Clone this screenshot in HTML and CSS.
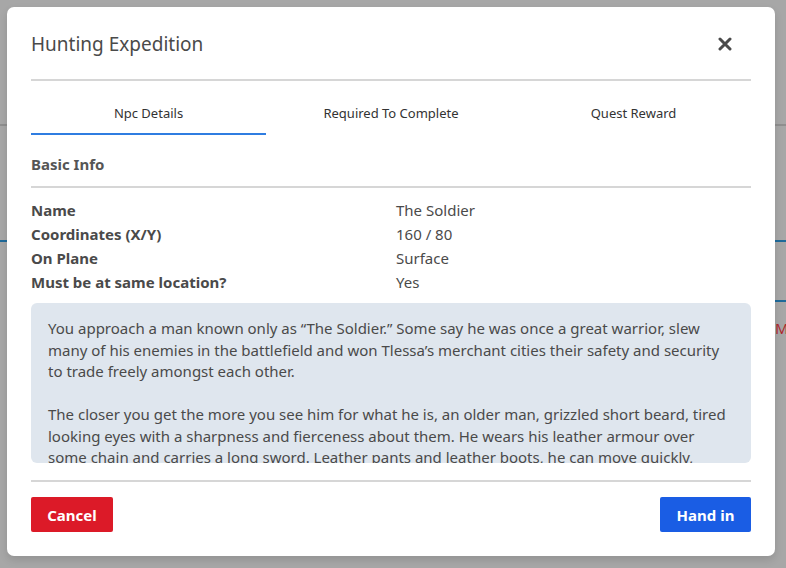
FILE: index.html
```html
<!DOCTYPE html>
<html>
<head>
<meta charset="utf-8">
<link rel="stylesheet" href="styles.css">
</head>
<body>
<div class="backdrop">
  <div class="bg-line bg-line-gray"></div>
  <div class="bg-line bg-line-blue"></div>
  <div class="bg-line bg-line-blue2"></div>
  <div class="bg-red">Mo</div>
</div>
<div class="overlay">
  <div class="modal">
    <div class="modal-header">
      <h2 class="modal-title">Hunting Expedition</h2>
      <button class="close-btn" aria-label="Close">
        <svg width="14" height="14" viewBox="0 0 14 14"><path d="M2 2 L12 12 M12 2 L2 12" stroke="#4a4a4a" stroke-width="3" stroke-linecap="round"/></svg>
      </button>
    </div>
    <div class="tabs">
      <div class="tab active">Npc Details</div>
      <div class="tab">Required To Complete</div>
      <div class="tab">Quest Reward</div>
    </div>
    <div class="section-title">Basic Info</div>
    <div class="info-grid">
      <div class="label">Name</div><div class="value">The Soldier</div>
      <div class="label">Coordinates (X/Y)</div><div class="value">160 / 80</div>
      <div class="label">On Plane</div><div class="value">Surface</div>
      <div class="label">Must be at same location?</div><div class="value">Yes</div>
    </div>
    <div class="description">
      <p>You approach a man known only as “The Soldier.” Some say he was once a great warrior, slew many of his enemies in the battlefield and won Tlessa’s merchant cities their safety and security to trade freely amongst each other.</p>
      <p>The closer you get the more you see him for what he is, an older man, grizzled short beard, tired looking eyes with a sharpness and fierceness about them. He wears his leather armour over some chain and carries a long sword. Leather pants and leather boots, he can move quickly, <span class="nw">and strike</span> with precision when he needs to.</p>
    </div>
    <div class="modal-footer">
      <button class="btn btn-cancel">Cancel</button>
      <button class="btn btn-primary">Hand in</button>
    </div>
  </div>
</div>
</body>
</html>
```
FILE: styles.css
```css
* { box-sizing: border-box; }
html, body {
  margin: 0;
  padding: 0;
  width: 786px;
  height: 568px;
  overflow: hidden;
  background: #a7a7a7;
  font-family: "Noto Sans", "Lato", sans-serif;
  color: #4a4a4a;
}
.backdrop {
  position: absolute;
  inset: 0;
}
.bg-line {
  position: absolute;
  left: 0;
  right: 0;
  height: 2px;
}
.bg-line-gray { top: 124px; background: #8f8f8f; }
.bg-line-blue { top: 240px; background: #1f6a9a; }
.bg-line-blue2 { top: 300px; left: 700px; background: #1f6a9a; }
.bg-red {
  position: absolute;
  left: 775px;
  top: 318px;
  width: 11px;
  overflow: hidden;
  white-space: nowrap;
  font-size: 15px;
  line-height: 20px;
  color: #b0262c;
}
.overlay {
  position: absolute;
  inset: 0;
}
.modal {
  position: absolute;
  left: 7px;
  top: 7px;
  width: 768px;
  height: 549px;
  background: #fff;
  border-radius: 7px;
  box-shadow: 0 4px 8px rgba(0,0,0,0.12);
  padding: 0 24px 24px;
  display: flex;
  flex-direction: column;
}
.modal-header {
  display: flex;
  align-items: center;
  justify-content: space-between;
  padding: 25px 0 23px;
  border-bottom: 2px solid #d6d6d6;
}
.modal-title {
  margin: 0;
  font-size: 19px;
  line-height: 24px;
  font-weight: 400;
  color: #4a4a4a;
}
.close-btn {
  border: 0;
  background: none;
  padding: 0;
  margin-right: 19px;
  width: 14px;
  height: 14px;
  display: flex;
}
.tabs {
  display: grid;
  grid-template-columns: 235px 250px 235px;
}
.tab {
  text-align: center;
  font-size: 13px;
  line-height: 20px;
  padding: 22px 0 10px;
  border-bottom: 2px solid transparent;
  color: #333;
}
.tab.active { border-bottom-color: #2f7de1; }
.section-title {
  font-weight: 700;
  font-size: 15px;
  line-height: 20px;
  padding: 19px 0 12px;
  border-bottom: 2px solid #d6d6d6;
  color: #555;
}
.info-grid {
  display: grid;
  grid-template-columns: 365px 1fr;
  padding-top: 10px;
  font-size: 15px;
  line-height: 24px;
}
.label { font-weight: 700; color: #4a4a4a; }
.value { color: #4a4a4a; }
.description {
  margin-top: 9px;
  height: 160px;
  flex: none;
  overflow: hidden;
  background: #dfe6ee;
  border-radius: 6px;
  padding: 15px 17px;
  font-size: 15px;
  line-height: 21.5px;
  color: #4a4a4a;
}
.description p { margin: 0 0 21.5px; }
.nw { white-space: nowrap; }
.modal-footer {
  margin-top: 17px;
  border-top: 2px solid #d6d6d6;
  padding-top: 15px;
  display: flex;
  justify-content: space-between;
}
.btn {
  border: 0;
  border-radius: 2px;
  height: 35px;
  padding: 0 14px;
  font-family: inherit;
  font-size: 15px;
  font-weight: 700;
  color: #fff;
}
.btn-cancel { background: #dc1a28; width: 82px; }
.btn-primary { background: #1a5de4; width: 91px; }
```
